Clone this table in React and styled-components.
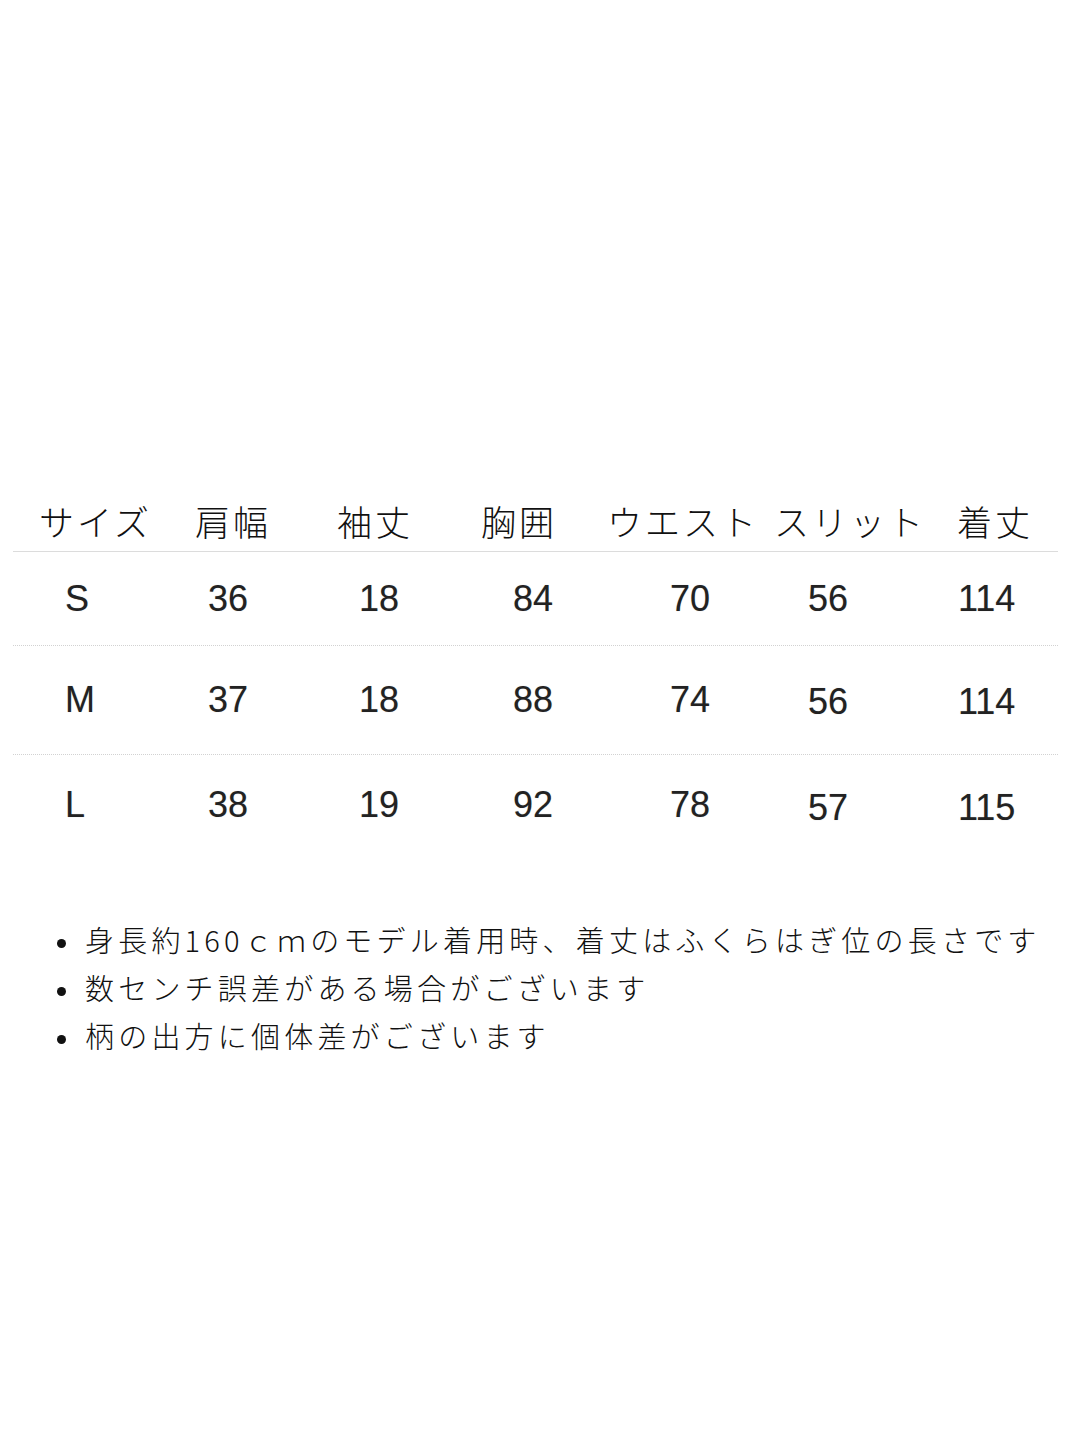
import React from 'react';
import styled, { createGlobalStyle } from 'styled-components';

const GlobalStyle = createGlobalStyle`
  html, body {
    margin: 0;
    padding: 0;
    background: #fff;
  }
`
const PageStyled = styled.div`
  width: 1080px;
  min-height: 1440px;
  padding-top: 496px;
  box-sizing: border-box;
  background: #fff;
`
const TableStyled = styled.div`
  margin: 0 22px 0 13px;
`
const HeaderRowStyled = styled.div`
  display: grid;
  grid-template-columns: 156px 142px 144px 126px 167px 183px auto;
  padding: 0 0 5px 26px;
  border-bottom: 1.5px solid #dcdcdc;
`
const HeaderCellStyled = styled.div`
  font-family: "Noto Sans CJK JP", sans-serif;
  font-weight: 300;
  font-size: 35px;
  line-height: 50px;
  letter-spacing: 3px;
  color: #111;
  white-space: nowrap;
`
const DataRowStyled = styled.div`
  display: grid;
  grid-template-columns: 143px 151px 154px 157px 138px 150px auto;
  align-items: center;
  height: ${p => p.$h}px;
  padding-left: 52px;
  border-bottom: ${p => (p.$last ? 'none' : '1.5px dotted #d2d2d2')};
`
const DataCellStyled = styled.div`
  font-family: "Liberation Sans", Arial, sans-serif;
  font-size: 36px;
  color: #222;
  text-shadow: 0 0 1px rgba(0, 0, 0, 0.25);
  transform: translateY(${p => p.$dy || 0}px);
`
const NotesStyled = styled.ul`
  list-style: none;
  margin: 60px 0 0;
  padding: 0 0 0 85px;
`
const NoteStyled = styled.li`
  position: relative;
  font-family: "Noto Sans CJK JP", sans-serif;
  font-weight: 300;
  font-size: 29px;
  line-height: 48px;
  letter-spacing: 4.2px;
  color: #111;
  white-space: nowrap;
  &::before {
    content: '';
    position: absolute;
    left: -28px;
    top: 24px;
    width: 9px;
    height: 9px;
    border-radius: 50%;
    background: #111;
  }
`

const headers = ['サイズ', '肩幅', '袖丈', '胸囲', 'ウエスト', 'スリット', '着丈']
const rows = [
  { h: 93, cells: ['S', '36', '18', '84', '70', '56', '114'], dy: [0, 0, 0, 0, 0, 0, 0] },
  { h: 108, cells: ['M', '37', '18', '88', '74', '56', '114'], dy: [0, 0, 0, 0, 0, 2, 2] },
  { h: 100, cells: ['L', '38', '19', '92', '78', '57', '115'], dy: [0, 0, 0, 0, 0, 3, 3], last: true },
]
const notes = [
  '身長約160ｃｍのモデル着用時、着丈はふくらはぎ位の長さです',
  '数センチ誤差がある場合がございます',
  '柄の出方に個体差がございます',
]

const App = () => {
  return (
    <PageStyled>
      <GlobalStyle />
      <TableStyled>
        <HeaderRowStyled>
          {headers.map(h => <HeaderCellStyled key={h}>{h}</HeaderCellStyled>)}
        </HeaderRowStyled>
        {rows.map(r => (
          <DataRowStyled key={r.cells[0]} $h={r.h} $last={r.last}>
            {r.cells.map((c, i) => <DataCellStyled key={i} $dy={r.dy[i]}>{c}</DataCellStyled>)}
          </DataRowStyled>
        ))}
      </TableStyled>
      <NotesStyled>
        {notes.map(n => <NoteStyled key={n}>{n}</NoteStyled>)}
      </NotesStyled>
    </PageStyled>
  )
}

export default App
